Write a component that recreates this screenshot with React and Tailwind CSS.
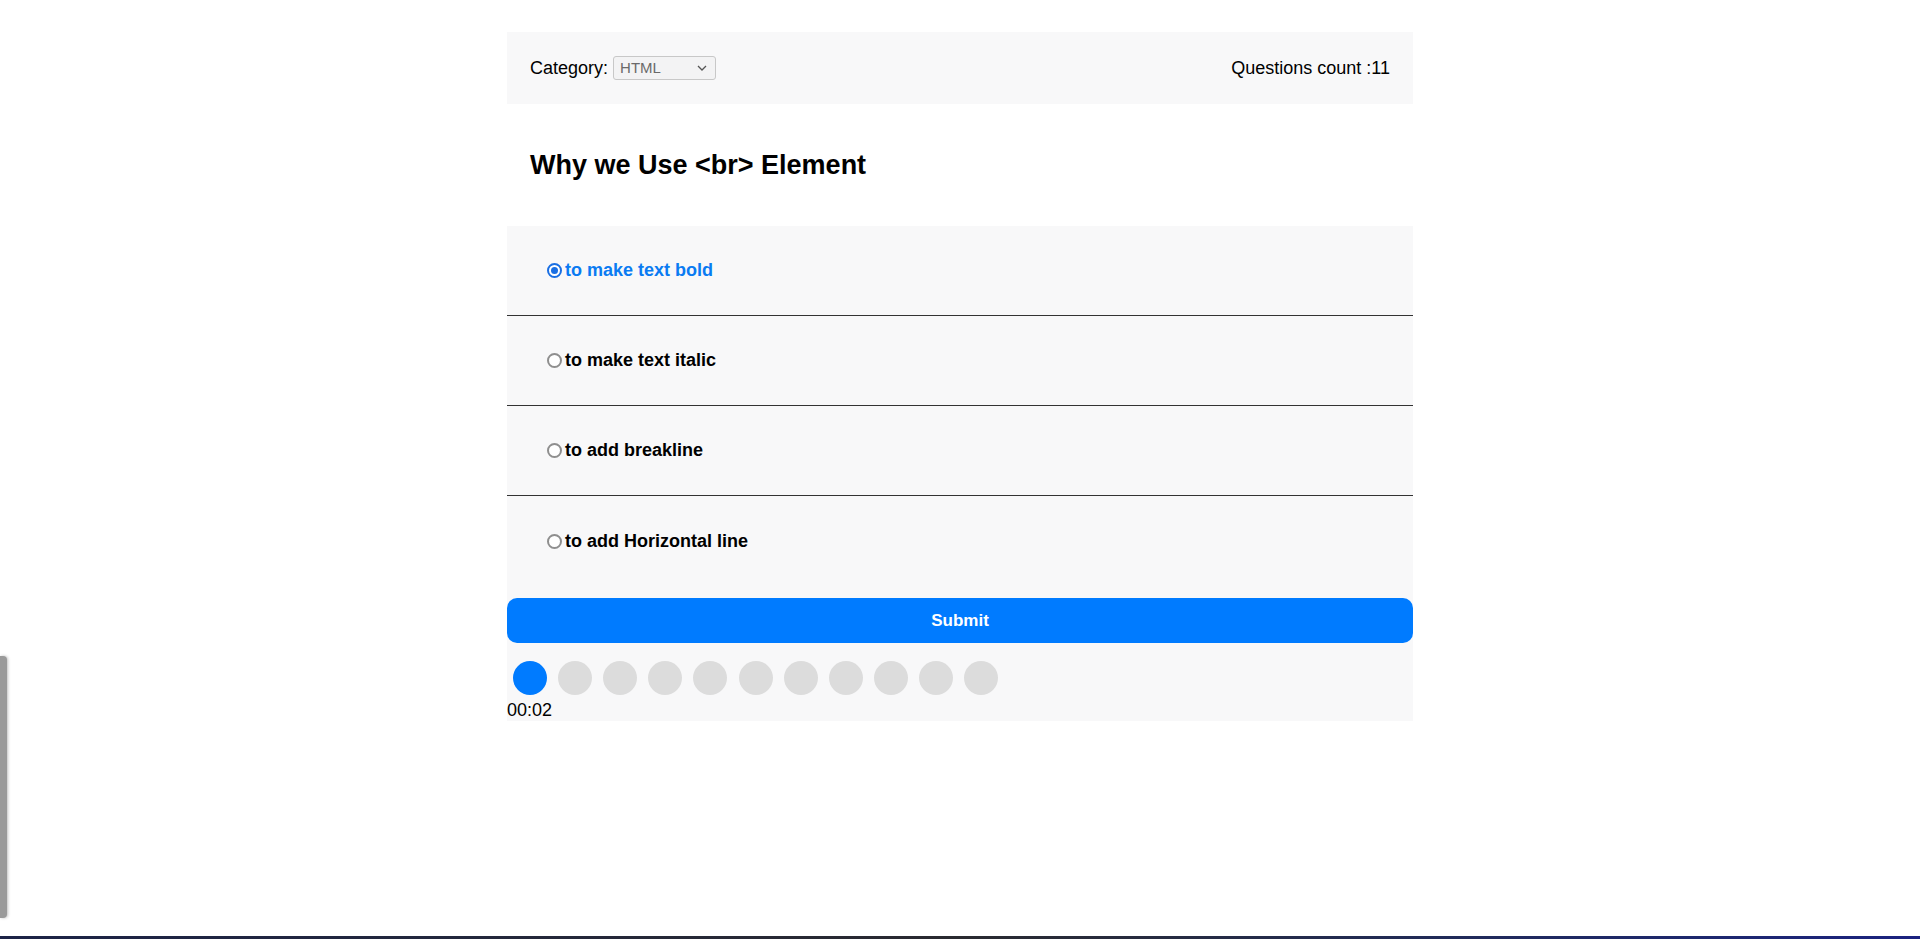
import React from "react";

const options = [
  "to make text bold",
  "to make text italic",
  "to add breakline",
  "to add Horizontal line",
];

function Radio({ checked }) {
  return checked ? (
    <span className="flex h-[15px] w-[15px] shrink-0 items-center justify-center rounded-full border-[2px] border-[#1a6fe3] bg-white">
      <span className="h-[7px] w-[7px] rounded-full bg-[#1a6fe3]" />
    </span>
  ) : (
    <span className="h-[15px] w-[15px] shrink-0 rounded-full border-[2px] border-[#8f8f8f] bg-white" />
  );
}

export default function App() {
  return (
    <div
      className="relative min-h-[939px] w-full bg-white text-black"
      style={{ fontFamily: '"Liberation Sans", Arial, sans-serif' }}
    >
      <div className="mx-auto w-[906px] pt-[32px]">
        <div className="flex h-[72px] items-center justify-between bg-[#f8f8f9] px-[23px] text-[18px]">
          <div className="flex items-center">
            <span>Category:</span>
            <div className="ml-[5px] flex h-[24px] w-[103px] items-center justify-between rounded-[3px] border border-[#c8c8c8] bg-[#f3f3f4] pl-[6px] pr-[8px] text-[15px] text-[#6a6a6a]">
              <span>HTML</span>
              <svg width="10" height="6" viewBox="0 0 10 6" fill="none">
                <path d="M1 1l4 4 4-4" stroke="#555" strokeWidth="1.3" />
              </svg>
            </div>
          </div>
          <span>Questions count :11</span>
        </div>

        <div className="flex h-[122px] items-center px-[23px]">
          <h2 className="text-[27px] font-bold leading-[31px]">Why we Use &lt;br&gt; Element</h2>
        </div>

        <div className="bg-[#f8f8f9]">
          {options.map((o, i) => (
            <div
              key={o}
              className={
                "flex h-[90px] items-center pl-[40px] " +
                (i < 3 ? "border-b border-[#333333]" : "")
              }
            >
              <label className="flex items-center gap-[3px]">
                <Radio checked={i === 0} />
                <span
                  className={
                    "text-[18px] font-bold " + (i === 0 ? "text-[#0a7bf2]" : "text-black")
                  }
                >
                  {o}
                </span>
              </label>
            </div>
          ))}
          <div className="pt-[12px]">
            <button className="flex h-[45px] w-full items-center justify-center rounded-[10px] bg-[#007bff] text-[17px] font-bold text-white">
              Submit
            </button>
          </div>
          <div className="flex pt-[12px]">
            {Array.from({ length: 11 }).map((_, i) => (
              <span
                key={i}
                className={
                  "m-[5.6px] h-[34px] w-[34px] rounded-full " +
                  (i === 0 ? "bg-[#007bff]" : "bg-[#dcdcdc]")
                }
              />
            ))}
          </div>
          <div className="text-[18px] leading-[20.5px]">00:02</div>
        </div>
      </div>

      <div className="pointer-events-none fixed left-0 top-[656px] h-[262px] w-[7px] rounded-r-[4px] bg-[#9a9a9a] shadow-[1px_0_3px_rgba(0,0,0,0.25)]" />
      <div className="fixed bottom-0 left-0 h-[3px] w-full bg-gradient-to-r from-[#1c2347] via-[#2a2a30] to-[#1b2280]" />
    </div>
  );
}
